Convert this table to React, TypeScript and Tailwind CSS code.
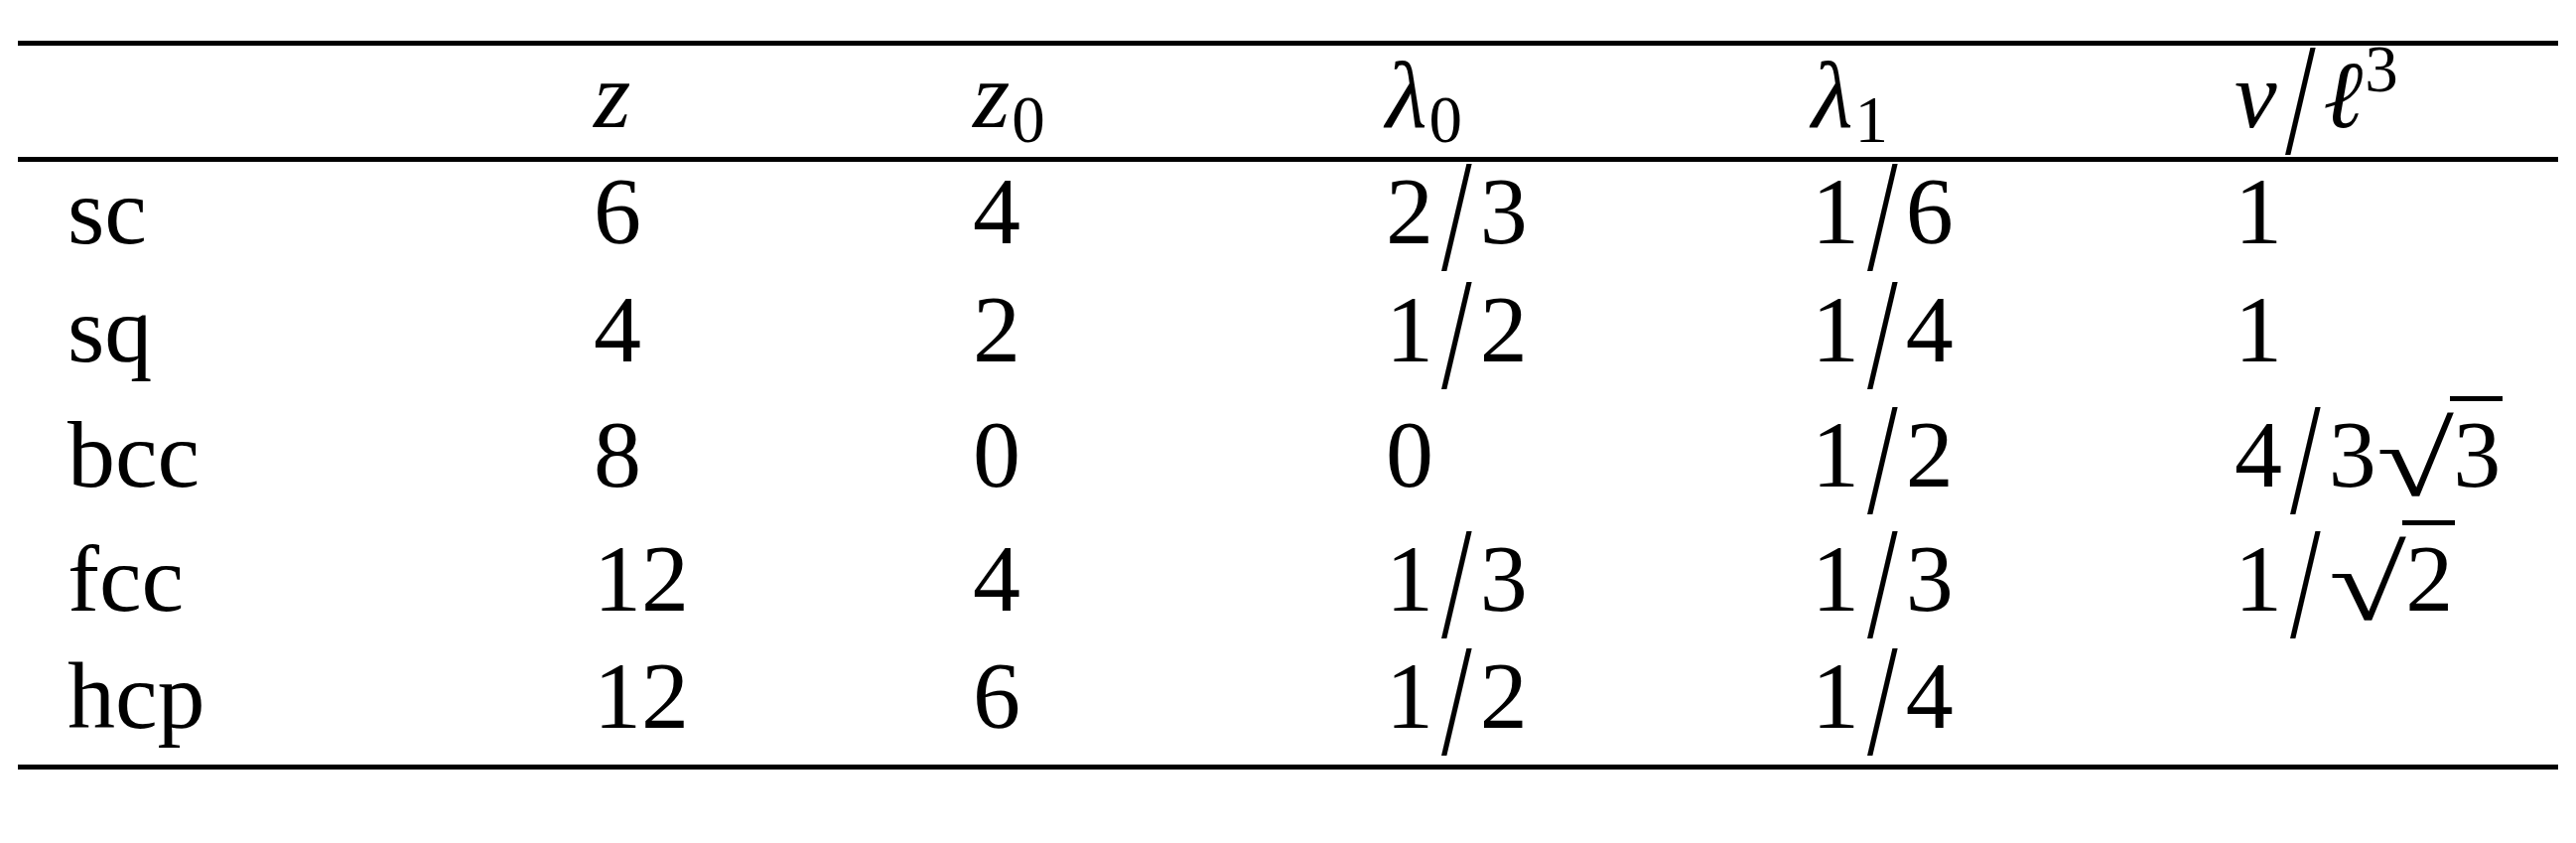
import type { ReactNode } from 'react';

const cols = 'grid grid-cols-[536px_382px_416px_429px_426px_1fr]';

function Slash() {
  return (
    <span className="relative top-[-4px] inline-block mx-[10px] leading-none scale-y-[1.68] scale-x-[1.15] origin-[50%_36px]">
      /
    </span>
  );
}

function Sub({ children }: { children: ReactNode }) {
  return <span className="relative top-[15px] not-italic text-[67px] leading-none ml-[2px]">{children}</span>;
}

function Sup({ children }: { children: ReactNode }) {
  return <span className="relative top-[-36px] not-italic text-[67px] leading-none ml-[2px]">{children}</span>;
}

function Sqrt({ children }: { children: ReactNode }) {
  return (
    <>
      <span className="inline-block leading-none scale-x-[1.48] scale-y-[1.1] origin-[0_-6px] mr-[22px]">√</span>
      <span className="border-t-[5px] border-black pl-[3px] pr-[2px]">{children}</span>
    </>
  );
}

function Frac({ a, b }: { a: ReactNode; b: ReactNode }) {
  return (
    <span>
      {a}
      <Slash />
      {b}
    </span>
  );
}

const rows: { label: string; h: string; cells: ReactNode[] }[] = [
  { label: 'sc', h: 'h-[119px]', cells: ['6', '4', <Frac a="2" b="3" />, <Frac a="1" b="6" />, '1'] },
  { label: 'sq', h: 'h-[126px]', cells: ['4', '2', <Frac a="1" b="2" />, <Frac a="1" b="4" />, '1'] },
  {
    label: 'bcc',
    h: 'h-[125px]',
    cells: ['8', '0', '0', <Frac a="1" b="2" />, <Frac a="4" b={<>3<Sqrt>3</Sqrt></>} />],
  },
  {
    label: 'fcc',
    h: 'h-[118px]',
    cells: ['12', '4', <Frac a="1" b="3" />, <Frac a="1" b="3" />, <Frac a="1" b={<Sqrt>2</Sqrt>} />],
  },
  { label: 'hcp', h: 'h-[119px]', cells: ['12', '6', <Frac a="1" b="2" />, <Frac a="1" b="4" />, ''] },
];

export default function App() {
  return (
    <div className="w-[2595px] h-[849px] bg-white text-black pt-[41px] px-[18px] font-[Liberation_Serif,DejaVu_Serif,serif] text-[96px] leading-[99px]">
      <div className="border-t-[5px] border-b-[5px] border-black">
        <div className={`${cols} h-[117px] pl-[44px] border-b-[5px] border-black`}>
          <div />
          <div className="italic">z</div>
          <div>
            <span className="italic">z</span>
            <Sub>0</Sub>
          </div>
          <div>
            <span className="italic">λ</span>
            <Sub>0</Sub>
          </div>
          <div>
            <span className="italic">λ</span>
            <Sub>1</Sub>
          </div>
          <div>
            <span className="italic">v</span>
            <Slash />
            <span className="italic">ℓ</span>
            <Sup>3</Sup>
          </div>
        </div>
        {rows.map((r) => (
          <div key={r.label} className={`${cols} ${r.h} pl-[44px]`}>
            <div className="pl-[6px]">{r.label}</div>
            {r.cells.map((c, i) => (
              <div key={i} className="whitespace-nowrap">
                {c}
              </div>
            ))}
          </div>
        ))}
      </div>
    </div>
  );
}
